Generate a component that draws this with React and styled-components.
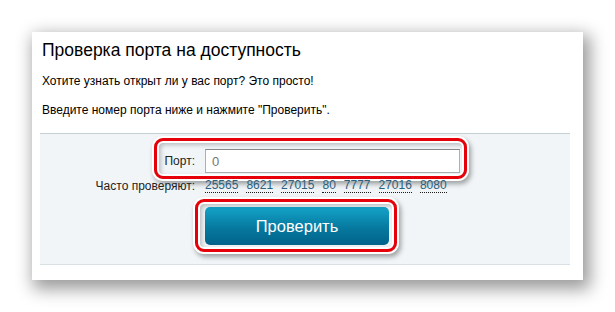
import React from "react";
import styled, { createGlobalStyle } from "styled-components";

const GlobalStyle = createGlobalStyle`
  html, body {
    margin: 0;
    padding: 0;
    background: #ffffff;
  }
  body {
    font-family: "Liberation Sans", Arial, sans-serif;
    color: #000;
  }
`;

const Page = styled.div`
  padding: 32px;
  width: 615px;
  height: 312px;
  box-sizing: border-box;
  overflow: hidden;
`;

const Card = styled.div`
  width: 551px;
  box-sizing: border-box;
  background: #fff;
  padding: 7px 13px 15px 8px;
  box-shadow: 4px 6px 16px 3px rgba(0, 0, 0, 0.4);
`;

const Title = styled.h1`
  margin: 0 0 12px 2px;
  font-size: 17.5px;
  line-height: 22px;
  font-weight: normal;
`;

const Text = styled.p`
  margin: 0 0 ${(props) => props.gap || 0}px 2px;
  font-size: 12px;
  line-height: 16px;
`;

const Panel = styled.div`
  background: #f1f5f7;
  border-top: 1px solid #c4cfd4;
  border-bottom: 1px solid #d8e0e3;
  padding: 15px 0 19px;
`;

const Row = styled.div`
  position: relative;
  display: grid;
  grid-template-columns: 155px 255px;
  column-gap: 10px;
  align-items: center;
  margin-top: ${(props) => props.top || 0}px;
`;

const Label = styled.span`
  text-align: right;
  font-size: 12px;
  color: #222;
`;

const Input = styled.input`
  box-sizing: border-box;
  width: 255px;
  height: 24px;
  margin: 0;
  padding: 0 6px;
  border: 1px solid #aab0b3;
  border-top-color: #888;
  background: #fff;
  font-family: "Liberation Sans", Arial, sans-serif;
  font-size: 13px;
  color: #999;
  outline: none;
`;

const Links = styled.div`
  display: flex;
  gap: 8px;
  font-size: 12px;
  line-height: 14px;
`;

const PortLink = styled.a`
  color: #2c5f7e;
  text-decoration: none;
  border-bottom: 1px dotted #1a1a1a;
  cursor: pointer;
`;

const CheckButton = styled.button`
  width: 184px;
  height: 38px;
  border: none;
  border-radius: 5px;
  background: linear-gradient(#14a3c9, #06799f 55%, #02628a);
  color: #fff;
  font-family: "Liberation Sans", Arial, sans-serif;
  font-size: 16.5px;
  cursor: pointer;
`;

const Highlight = styled.div`
  position: absolute;
  left: ${(props) => props.left}px;
  top: ${(props) => props.top}px;
  width: ${(props) => props.width}px;
  height: ${(props) => props.height}px;
  box-sizing: border-box;
  border: 3px solid #e5000a;
  border-radius: 9px;
  pointer-events: none;
  box-shadow: inset 0 0 0 2px #fff, inset 2px 2px 4px 2px rgba(0, 0, 0, 0.22),
    0 0 0 2px #fff, 2px 3px 5px 2px rgba(0, 0, 0, 0.35);
`;

const ports = ["25565", "8621", "27015", "80", "7777", "27016", "8080"];

export default function App() {
  return (
    <>
      <GlobalStyle />
      <Page>
        <Card>
          <Title>Проверка порта на доступность</Title>
          <Text gap={13}>Хотите узнать открыт ли у вас порт? Это просто!</Text>
          <Text gap={15}>Введите номер порта ниже и нажмите "Проверить".</Text>
          <Panel>
            <Row>
              <Label>Порт:</Label>
              <Input placeholder="0" />
              <Highlight left={114} top={-11} width={313} height={41} />
            </Row>
            <Row top={5}>
              <Label>Часто проверяют:</Label>
              <Links>
                {ports.map((p) => (
                  <PortLink key={p}>{p}</PortLink>
                ))}
              </Links>
            </Row>
            <Row top={14}>
              <span />
              <div style={{ position: "relative" }}>
                <CheckButton>Проверить</CheckButton>
                <Highlight left={-10} top={-8} width={202} height={53} />
              </div>
            </Row>
          </Panel>
        </Card>
      </Page>
    </>
  );
}
